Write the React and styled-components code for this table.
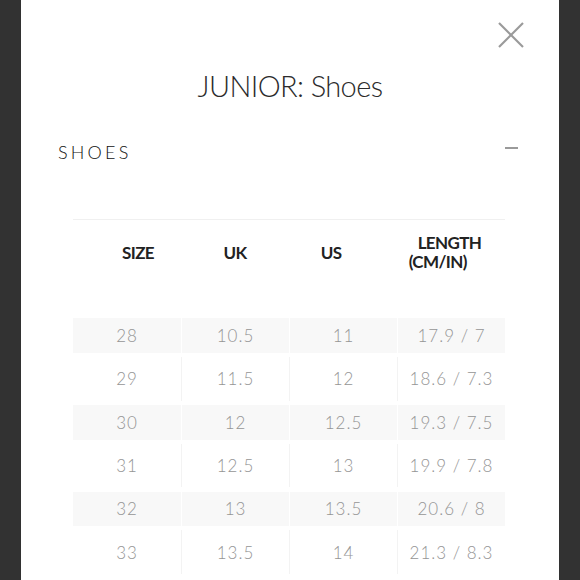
import React from 'react';
import styled, { createGlobalStyle } from 'styled-components';

const GlobalStyle = createGlobalStyle`
  html, body {
    margin: 0;
    padding: 0;
    background-color: #323232;
  }
  * {
    box-sizing: border-box;
  }
`;

const Page = styled.div`
  height: 100vh;
  display: flex;
  justify-content: center;
  overflow: hidden;
`;

const Modal = styled.div`
  width: 538px;
  height: 100%;
  background-color: #fff;
  display: flex;
  flex-direction: column;
  font-family: Lato, 'Open Sans', sans-serif;
`;

const TopBar = styled.div`
  display: flex;
  justify-content: flex-end;
  padding: 22px 35px 0 0;
`;

const CloseButton = styled.button`
  width: 26px;
  height: 26px;
  padding: 0;
  border: none;
  background: none;
  cursor: pointer;
  display: block;
`;

const Title = styled.h2`
  margin: 21px 0 0;
  text-align: center;
  font-size: 29px;
  line-height: 34px;
  font-weight: 300;
  letter-spacing: -0.6px;
  color: #2b2b2b;
`;

const SectionRow = styled.div`
  display: flex;
  align-items: center;
  justify-content: space-between;
  margin-top: 40px;
  padding: 0 41px 0 37px;
  height: 18px;
`;

const SectionLabel = styled.span`
  font-size: 18px;
  line-height: 18px;
  font-weight: 300;
  letter-spacing: 3.2px;
  color: #111;
`;

const Minus = styled.span`
  width: 13px;
  height: 2px;
  background-color: #9a9a9a;
  margin-top: -8px;
`;

const Table = styled.div`
  margin: 58px 54px 0 52px;
  border-top: 1px solid #f0f0f0;
`;

const HeadRow = styled.div`
  display: grid;
  grid-template-columns: repeat(4, 1fr);
  height: 94px;
  padding-top: 13px;
  align-items: start;
`;

const HeadCell = styled.div`
  height: 38px;
  display: flex;
  align-items: center;
  justify-content: center;
  transform: translateX(${p => p.$shift || 0}px);
  font-size: 17px;
  line-height: 19px;
  font-weight: 700;
  letter-spacing: -0.6px;
  color: #222;
`;

const HeadStack = styled.div`
  display: flex;
  flex-direction: column;
  align-items: flex-start;
`;

const Indent = styled.span`
  padding-left: 9px;
`;

const Row = styled.div`
  display: grid;
  grid-template-columns: repeat(4, 1fr);
  height: 43.3px;
`;

const Cell = styled.div`
  display: flex;
  align-items: center;
  justify-content: center;
  border-left: ${p => (p.$first ? 'none' : `1px solid ${p.$shaded ? '#fff' : '#f3f3f3'}`)};
  background: ${p =>
    p.$shaded
      ? 'linear-gradient(#fff 0, #fff 4.5px, #f8f8f8 4.5px, #f8f8f8 38.8px, #fff 38.8px)'
      : '#fff'};
  font-size: 17px;
  font-weight: 300;
  letter-spacing: 1px;
  color: #959595;
`;

const sizes = [
  ['28', '10.5', '11', '17.9 / 7'],
  ['29', '11.5', '12', '18.6 / 7.3'],
  ['30', '12', '12.5', '19.3 / 7.5'],
  ['31', '12.5', '13', '19.9 / 7.8'],
  ['32', '13', '13.5', '20.6 / 8'],
  ['33', '13.5', '14', '21.3 / 8.3'],
];

const CloseIcon = () => (
  <svg width="26" height="26" viewBox="0 0 26 26">
    <line x1="1" y1="1" x2="25" y2="25" stroke="#9a9a9a" strokeWidth="2.2" />
    <line x1="25" y1="1" x2="1" y2="25" stroke="#9a9a9a" strokeWidth="2.2" />
  </svg>
);

const App = () => {
  return (
    <Page>
      <GlobalStyle />
      <Modal>
        <TopBar>
          <CloseButton aria-label="Close">
            <CloseIcon />
          </CloseButton>
        </TopBar>
        <Title>JUNIOR: Shoes</Title>
        <SectionRow>
          <SectionLabel>SHOES</SectionLabel>
          <Minus />
        </SectionRow>
        <Table>
          <HeadRow>
            <HeadCell $shift={11}>SIZE</HeadCell>
            <HeadCell>UK</HeadCell>
            <HeadCell $shift={-12}>US</HeadCell>
            <HeadCell $shift={-6}>
              <HeadStack>
                <Indent>LENGTH</Indent>
                <span>(CM/IN)</span>
              </HeadStack>
            </HeadCell>
          </HeadRow>
          {sizes.map((row, i) => (
            <Row key={row[0]}>
              {row.map((value, j) => (
                <Cell key={j} $first={j === 0} $shaded={i % 2 === 0}>
                  {value}
                </Cell>
              ))}
            </Row>
          ))}
        </Table>
      </Modal>
    </Page>
  );
};

export default App;
